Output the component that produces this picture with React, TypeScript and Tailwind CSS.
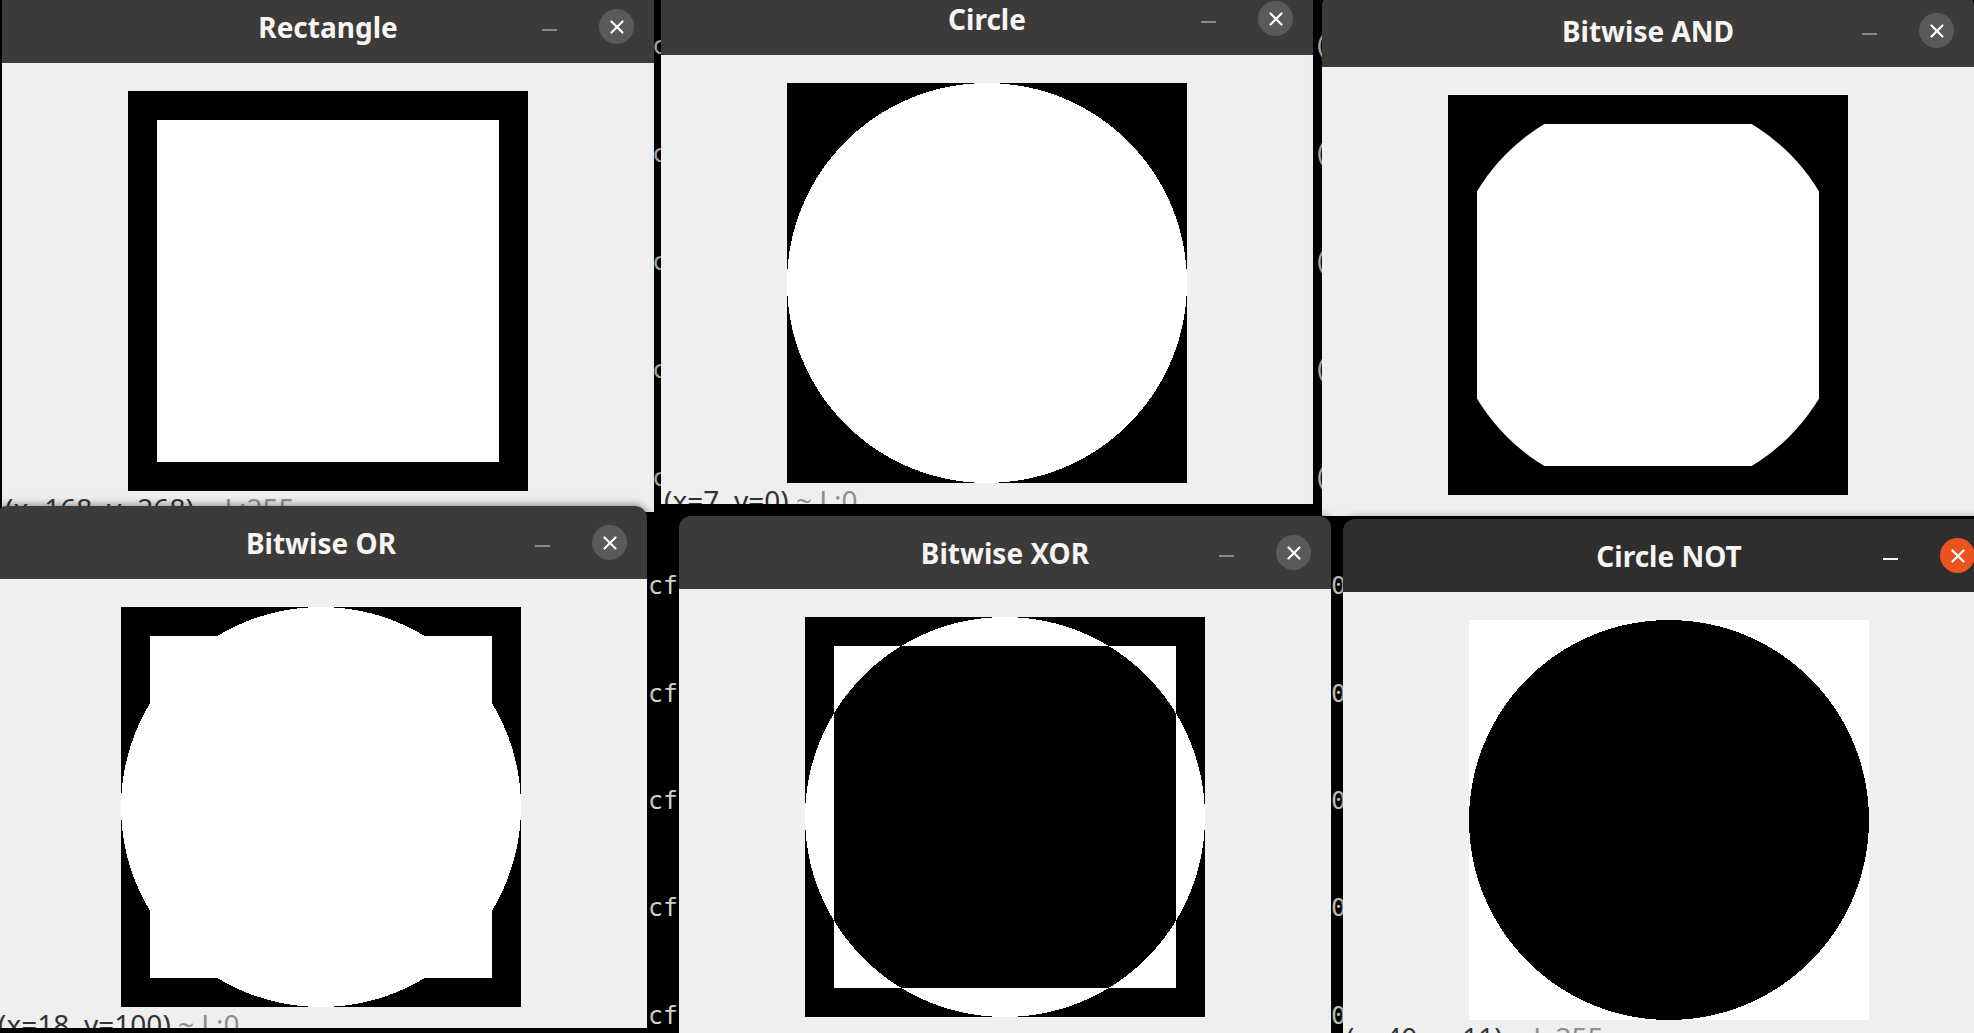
import { X } from "lucide-react";
import type { ReactNode } from "react";

type WinProps = {
  title: string;
  left: number;
  top: number;
  z: string;
  active?: boolean;
  status?: [string, string];
  children: ReactNode;
};

// one OpenCV imshow window (GTK headerbar + 400x400 image + status line)
const CvWindow = ({ title, left, top, z, active, status, children }: WinProps) => {
  return (
    <div
      className={`absolute w-[652px] h-[522px] flex flex-col overflow-hidden rounded-t-[12px] shadow-[0_0_10px_rgba(0,0,0,0.55)] ${z}`}
      style={{ left, top }}
    >
      <div
        className={`relative h-[73px] shrink-0 flex items-center justify-center ${
          active ? "bg-[#302e2d]" : "bg-[#3d3b39]"
        }`}
      >
        <span className="font-['Noto_Sans',sans-serif] font-bold text-[28px] text-[#f6f5f4]">
          {title}
        </span>
        <span
          className={`absolute right-[97px] top-[39px] w-[15px] h-[2px] ${
            active ? "bg-[#f6f5f4]" : "bg-[#8d8b89]"
          }`}
        ></span>
        <span
          className={`absolute right-[20px] top-[19px] w-[35px] h-[35px] rounded-full flex items-center justify-center ${
            active ? "bg-[#e95420]" : "bg-[#5c5a58]"
          }`}
        >
          <X size={22} strokeWidth={2.4} color="#ffffff" />
        </span>
      </div>
      <div className="flex-1 bg-[#efefef] flex flex-col">
        <div className="pt-[28px] flex justify-center">{children}</div>
        <div className="pl-[3px] pt-[1px] font-['Noto_Sans',sans-serif] text-[28px] leading-[32px] whitespace-nowrap">
          {status ? (
            <>
              <span className="text-[#2e3436]">{status[0]}</span>
              <span className="text-[#8b8e8f]"> {status[1]}</span>
            </>
          ) : null}
        </div>
      </div>
    </div>
  );
};

const Img = ({ children }: { children: ReactNode }) => (
  <svg width="400" height="400" viewBox="0 0 400 400" shapeRendering="crispEdges">
    {children}
  </svg>
);

const RectImg = () => (
  <Img>
    <rect x="0" y="0" width="400" height="400" fill="#000" />
    <rect x="29" y="29" width="342" height="342" fill="#fff" />
  </Img>
);

const CircleImg = () => (
  <Img>
    <rect x="0" y="0" width="400" height="400" fill="#000" />
    <circle cx="200" cy="200" r="200" fill="#fff" />
  </Img>
);

const AndImg = () => (
  <Img>
    <defs>
      <clipPath id="andClip">
        <circle cx="200" cy="200" r="200" />
      </clipPath>
    </defs>
    <rect x="0" y="0" width="400" height="400" fill="#000" />
    <rect x="29" y="29" width="342" height="342" fill="#fff" clipPath="url(#andClip)" />
  </Img>
);

const OrImg = () => (
  <Img>
    <rect x="0" y="0" width="400" height="400" fill="#000" />
    <rect x="29" y="29" width="342" height="342" fill="#fff" />
    <circle cx="200" cy="200" r="200" fill="#fff" />
  </Img>
);

const XorImg = () => (
  <Img>
    <rect x="0" y="0" width="400" height="400" fill="#000" />
    <path
      fillRule="evenodd"
      fill="#fff"
      d="M29 29 H371 V371 H29 Z M0 200 A200 200 0 1 0 400 200 A200 200 0 1 0 0 200 Z"
    />
  </Img>
);

const NotImg = () => (
  <Img>
    <rect x="0" y="0" width="400" height="400" fill="#fff" />
    <circle cx="200" cy="200" r="200" fill="#000" />
  </Img>
);

const topRows = [47, 155, 263, 371, 479];
const bottomRows = [587, 695, 802, 909, 1017];

export default function App() {
  return (
    <div className="relative w-[1974px] h-[1033px] bg-black overflow-hidden">
      {/* terminal text showing through the gaps */}
      <div className="absolute inset-0 font-['DejaVu_Sans_Mono',monospace] text-[25px] leading-none text-[#d3d7cf]">
        {topRows.map((y) => (
          <span key={"c" + y} className="absolute left-[652px]" style={{ top: y - 14 }}>
            c
          </span>
        ))}
        {topRows.map((y) => (
          <span key={"p" + y} className="absolute left-[1313px]" style={{ top: y - 14 }}>
            (
          </span>
        ))}
        {bottomRows.map((y) => (
          <span key={"cf" + y} className="absolute left-[648px]" style={{ top: y - 14 }}>
            cf
          </span>
        ))}
        {bottomRows.map((y) => (
          <span key={"z" + y} className="absolute left-[1331px]" style={{ top: y - 14 }}>
            0
          </span>
        ))}
      </div>

      <CvWindow title="Rectangle" left={2} top={-10} z="z-10" status={["(x=168, y=268)", "~ L:255"]}>
        <RectImg />
      </CvWindow>
      <CvWindow title="Circle" left={661} top={-18} z="z-10" status={["(x=7, y=0)", "~ L:0"]}>
        <CircleImg />
      </CvWindow>
      <CvWindow title="Bitwise AND" left={1322} top={-6} z="z-10">
        <AndImg />
      </CvWindow>
      <CvWindow title="Bitwise OR" left={-5} top={506} z="z-20" status={["(x=18, y=100)", "~ L:0"]}>
        <OrImg />
      </CvWindow>
      <CvWindow title="Bitwise XOR" left={679} top={516} z="z-20">
        <XorImg />
      </CvWindow>
      <CvWindow title="Circle NOT" left={1343} top={519} z="z-30" active status={["(x=40, y=11)", "~ L:255"]}>
        <NotImg />
      </CvWindow>
    </div>
  );
}
